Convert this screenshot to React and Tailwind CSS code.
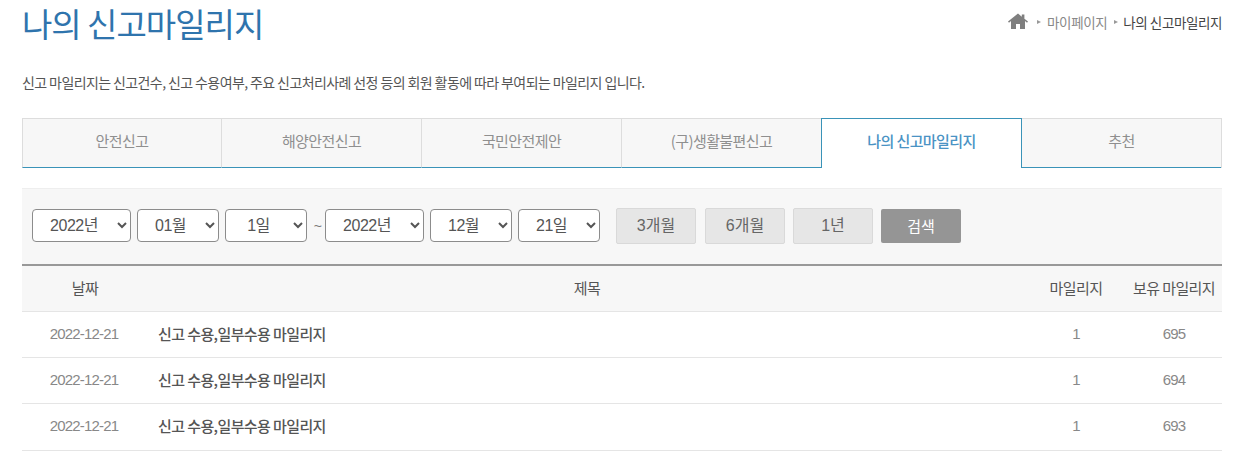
const KR = { fontFamily: '"Noto Sans CJK KR", "Liberation Sans", sans-serif' };
const MIX = { fontFamily: '"Liberation Sans", "Noto Sans CJK KR", sans-serif' };

const tabs = [
  ["안전신고", "w-[199px] border-l border-l-[#ddd]"],
  ["해양안전신고", "w-[200px] border-l border-l-[#ddd]"],
  ["국민안전제안", "w-[200px] border-l border-l-[#ddd]"],
  ["(구)생활불편신고", "w-[200px] border-l border-l-[#ddd]"],
  ["나의 신고마일리지", ""],
  ["추천", "flex-1"],
];
const rows = [["2022-12-21", "695", "h-[46px]"], ["2022-12-21", "694", "h-[46px]"], ["2022-12-21", "693", "h-[47px] pb-px"]];

function Sel({ w, v }) {
  return (
    <select
      defaultValue={v}
      style={MIX}
      className={`${w} h-[33px] rounded-[4px] border border-[#8c8c8c] bg-white pr-[3px] text-center text-[16px] tracking-[-0.5px] text-[#555]`}
    >
      <option>{v}</option>
    </select>
  );
}

function Btn({ children, className = "" }) {
  return (
    <button style={MIX} className={`w-20 h-9 rounded-[2px] border border-[#d9d9d9] bg-[#e6e6e6] text-[16px] tracking-normal text-[#666] ${className}`}>
      {children}
    </button>
  );
}

function Arrow() {
  return <span className="inline-block w-0 h-0 border-y-[2.5px] border-y-transparent border-l-[4px] border-l-[#999]" />;
}

export default function App() {
  return (
    <div style={KR} className="w-[1249px] h-[461px] overflow-hidden bg-white pl-[22px] pr-[27px] tracking-[-0.5px]">
      <div className="flex justify-between h-[60px]">
        <h1 className="text-[33px] leading-[46px] text-[#2f74ad] font-normal tracking-[-1px]">나의 신고마일리지</h1>
        <div className="flex items-center h-[44px] text-[13.5px] tracking-[-0.4px] text-[#888]">
          <svg width="20" height="16" viewBox="0 0 20 16" className="mr-[9px] mb-[2px]">
            <path d="M10 .5 0 8.6l1 1.1L3 8.1V16h5v-5h4v5h5V8.1l2 1.6 1-1.1-3.6-2.9V1.5h-2.6v2.3z" fill="#7f7f7f" />
          </svg>
          <Arrow />
          <span className="ml-[6px]">마이페이지</span>
          <span className="ml-[7px] flex"><Arrow /></span>
          <span className="ml-[5px] text-[#444]">나의 신고마일리지</span>
        </div>
      </div>

      <p className="mt-[12px] mb-[26px] h-[20px] text-[14px] leading-[20px] tracking-[-0.6px] text-[#555]">
        신고 마일리지는 신고건수, 신고 수용여부, 주요 신고처리사례 선정 등의 회원 활동에 따라 부여되는 마일리지 입니다.
      </p>

      <div className="flex h-[50px] border-r border-[#ddd] text-[15px] tracking-[-0.6px]">
        {tabs.map(([t, c], i) =>
          i === 4 ? (
            <div key={t} className="w-[201px] pb-1 flex items-center justify-center border border-b-0 border-[#3a93b8] bg-white font-medium text-[#4a93c4]">
              {t}
            </div>
          ) : (
            <div
              key={t}
              className={`${c} pb-1 flex items-center justify-center border-t border-t-[#ddd] border-b border-b-[#3a93b8] bg-[#f7f7f7] text-[#8f8f8f]`}
            >
              {t}
            </div>
          )
        )}
      </div>

      <div className="mt-5 h-[76px] flex items-center border-t border-[#eee] bg-[#f7f7f7] pl-[10px]">
        <div className="flex items-center gap-[6px] mb-[2px]">
          <Sel w="w-[99px]" v="2022년" />
          <Sel w="w-[82px]" v="01월" />
          <Sel w="w-[82px]" v="1일" />
        </div>
        <span style={MIX} className="w-[18px] pl-[3px] text-center text-[14px] text-[#777]">~</span>
        <div className="flex items-center gap-[6px] mb-[2px]">
          <Sel w="w-[99px]" v="2022년" />
          <Sel w="w-[82px]" v="12월" />
          <Sel w="w-[82px]" v="21일" />
        </div>
        <div className="ml-4 flex items-start gap-2 mb-px">
          <Btn className="mr-px">3개월</Btn>
          <Btn>6개월</Btn>
          <Btn>1년</Btn>
          <button className="mt-px w-20 h-[34px] rounded-[2px] bg-[#959595] text-[15px] tracking-normal text-white">검색</button>
        </div>
      </div>

      <div className="flex h-[48px] pb-px items-center border-t-2 border-b border-t-[#999] border-b-[#e5e5e5] bg-[#f7f7f7] text-[15px] tracking-[-0.6px] text-[#555]">
        <div className="w-[126px] text-center">날짜</div>
        <div className="flex-1 text-center">제목</div>
        <div className="w-[100px] text-center">마일리지</div>
        <div className="w-[96px] text-center">보유 마일리지</div>
      </div>

      {rows.map(([d, n, h]) => (
        <div key={n} className={`flex ${h} items-center border-b border-[#e5e5e5] text-[15px] tracking-[-0.6px]`}>
          <div style={MIX} className="w-[126px] pr-[2px] text-center tracking-[-0.8px] text-[#888]">{d}</div>
          <div className="flex-1 pl-[10px] font-medium text-[#555]">신고 수용,일부수용 마일리지</div>
          <div style={MIX} className="w-[100px] text-center text-[#888]">1</div>
          <div style={MIX} className="w-[96px] text-center tracking-[-0.8px] text-[#888]">{n}</div>
        </div>
      ))}
    </div>
  );
}
